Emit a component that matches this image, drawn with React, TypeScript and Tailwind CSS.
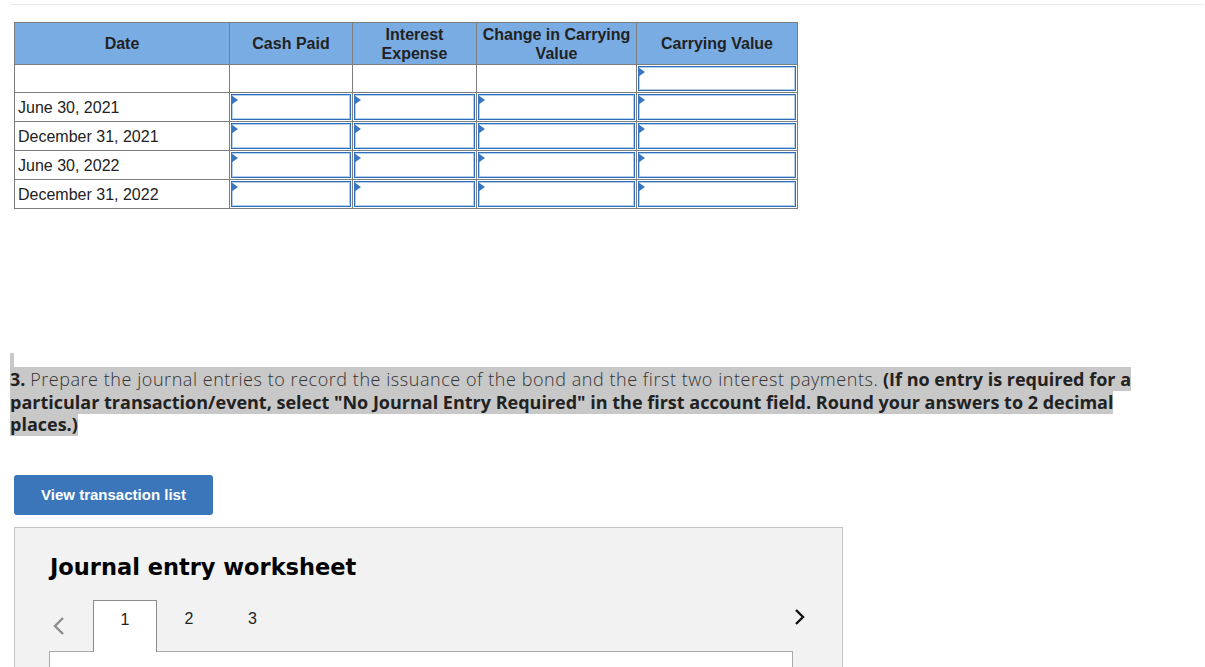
import React from 'react';

const rows = ['June 30, 2021', 'December 31, 2021', 'June 30, 2022', 'December 31, 2022'];

const InputCell: React.FC = () => (
  <div className="relative h-full w-full p-px">
    <div className="h-full w-full border border-[#2f6db8] bg-white shadow-[inset_0_0_0_1px_#b3cfee]" />
    <svg className="absolute left-[1px] top-[2px]" width="7" height="10" viewBox="0 0 7 10">
      <polygon points="0,0 7,5 0,10" fill="#3b77c1" />
    </svg>
  </div>
);

const headTh = 'border border-[#7d7d7d] bg-[#7aace4] text-[16px] font-bold leading-[19px] text-[#222]';

export default function App() {
  return (
    <div className="min-h-screen bg-white pt-1 pl-[10px] font-['Liberation_Sans',Arial,sans-serif] text-[#222]">
      <div className="h-px w-[1194px] bg-[#ebebeb]" />

      <table className="mt-[17px] ml-1 table-fixed border-collapse border border-[#7d7d7d]">
        <colgroup>
          <col className="w-[215px]" />
          <col className="w-[123px]" />
          <col className="w-[124px]" />
          <col className="w-[160px]" />
          <col className="w-[161px]" />
        </colgroup>
        <thead>
          <tr className="h-[42px]">
            <th className={headTh}>Date</th>
            <th className={headTh}>Cash Paid</th>
            <th className={headTh}>Interest<br />Expense</th>
            <th className={headTh}>Change in Carrying<br />Value</th>
            <th className={headTh}>Carrying Value</th>
          </tr>
        </thead>
        <tbody>
          <tr className="h-[28px]">
            <td className="border border-[#7d7d7d]" />
            <td className="border border-[#7d7d7d]" />
            <td className="border border-[#7d7d7d]" />
            <td className="border border-[#7d7d7d]" />
            <td className="h-[28px] border border-[#7d7d7d] p-0"><InputCell /></td>
          </tr>
          {rows.map((r) => (
            <tr key={r} className="h-[29px]">
              <td className="border border-[#7d7d7d] px-[3px] pt-[2px] text-[16px] leading-[20px]">{r}</td>
              {[0, 1, 2, 3].map((i) => (
                <td key={i} className="h-[29px] border border-[#7d7d7d] p-0"><InputCell /></td>
              ))}
            </tr>
          ))}
        </tbody>
      </table>

      <div className="mt-[144px] h-[15px] w-1 bg-[#c8c8c8]" />
      <p className="whitespace-nowrap font-['Open_Sans',sans-serif] text-[18px] leading-[22.7px] text-[#333]">
        <span className="bg-[#c8c8c8]">
          <b className="font-bold text-[#222]">3.</b>{' '}
          <span className="font-light tracking-[0.55px]">Prepare the journal entries to record the issuance of the bond and the first two interest payments.</span>{' '}
          <b className="font-bold text-[#222]">(If no entry is required for a</b>
        </span>
        <br />
        <span className="bg-[#c8c8c8]">
          <b className="font-bold text-[#222]">particular transaction/event, select "No Journal Entry Required" in the first account field. Round your answers to 2 decimal</b>
        </span>
        <br />
        <span className="bg-[#c8c8c8]">
          <b className="font-bold text-[#222]">places.)</b>
        </span>
      </p>

      <button className="ml-1 mt-[39px] flex h-[40px] w-[199px] items-center justify-center rounded-[3px] bg-[#3b76bb] text-[15px] font-bold text-white">
        View transaction list
      </button>

      <div className="ml-1 mt-[12px] h-[160px] w-[829px] border border-[#c4c4c4] bg-[#f2f2f2] pl-[35px] pt-[24px]">
        <h2 className="font-['DejaVu_Sans',Verdana,sans-serif] text-[22.5px] font-bold leading-[30px] text-black">
          Journal entry worksheet
        </h2>
        <div className="mt-[17px] flex h-[52px] items-end">
          <div className="flex h-[51px] w-[43px] items-center pl-[3px]">
            <svg width="12" height="20" viewBox="0 0 12 20">
              <polyline points="10,2 2,10 10,18" fill="none" stroke="#8c8c8c" strokeWidth="2.4" />
            </svg>
          </div>
          <div className="relative z-10 -mb-px flex h-[52px] w-[64px] justify-center border border-b-0 border-[#8c8c8c] bg-white pt-[7px] text-[16px]">1</div>
          <div className="flex h-[51px] w-[64px] justify-center pt-[7px] text-[16px]">2</div>
          <div className="flex h-[51px] w-[63px] justify-center pt-[7px] text-[16px]">3</div>
          <div className="flex h-[51px] flex-1 justify-end pr-[36px] pt-[8px]">
            <svg width="12" height="18" viewBox="0 0 12 18">
              <polyline points="2,2 9,9 2,16" fill="none" stroke="#111" strokeWidth="2.4" />
            </svg>
          </div>
        </div>
        <div className="h-[40px] w-[744px] -ml-px border border-[#aaaaaa] bg-white" />
      </div>
    </div>
  );
}
